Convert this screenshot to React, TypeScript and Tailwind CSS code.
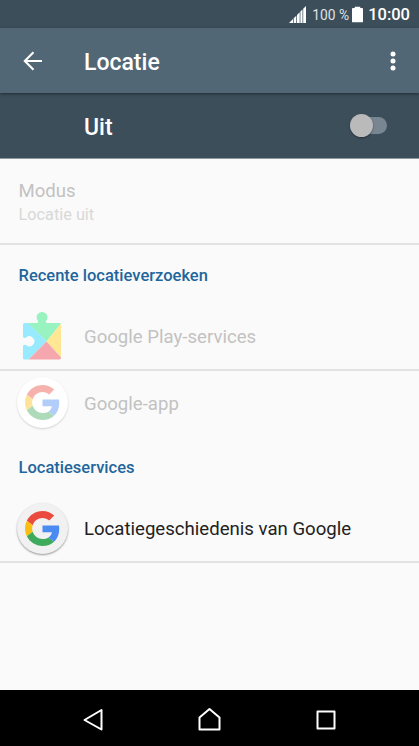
import React from "react";

interface AppRowProps {
  icon: React.ReactNode;
  label: string;
  disabled?: boolean;
}

const GoogleIcon: React.FC<{ disabled?: boolean }> = ({ disabled }) => (
  <div
    className={
      disabled
        ? "mb-[3px] flex size-[51px] items-center justify-center rounded-full bg-white shadow-[0_1px_2px_rgba(0,0,0,0.16)]"
        : "flex size-[51px] items-center justify-center rounded-full bg-[#f1f1f1] shadow-[0_1px_2px_rgba(0,0,0,0.4)]"
    }
  >
    <svg viewBox="0 0 48 48" className={disabled ? "size-[35px] opacity-40" : "size-[35px] opacity-95"}>
      <path
        fill="#EA4335"
        d="M24 9.5c3.54 0 6.71 1.22 9.21 3.6l6.85-6.85C35.9 2.38 30.47 0 24 0 14.62 0 6.51 5.38 2.56 13.22l7.98 6.19C12.43 13.72 17.74 9.5 24 9.5z"
      />
      <path
        fill="#4285F4"
        d="M46.98 24.55c0-1.57-.15-3.09-.38-4.55H24v9.02h12.94c-.58 2.96-2.26 5.48-4.78 7.18l7.73 6c4.51-4.18 7.09-10.36 7.09-17.65z"
      />
      <path
        fill="#FBBC05"
        d="M10.53 28.59c-.48-1.45-.76-2.99-.76-4.59s.27-3.14.76-4.59l-7.98-6.19C.92 16.46 0 20.12 0 24c0 3.88.92 7.54 2.56 10.78l7.97-6.19z"
      />
      <path
        fill="#34A853"
        d="M24 48c6.48 0 11.93-2.13 15.89-5.81l-7.73-6c-2.15 1.45-4.92 2.3-8.16 2.3-6.26 0-11.57-4.22-13.47-9.91l-7.98 6.19C6.51 42.62 14.62 48 24 48z"
      />
    </svg>
  </div>
);

const PlayServicesIcon = () => (
  <svg viewBox="0 0 38 49" className="mb-[3px] h-[49px] w-[38px]">
    {/* top quadrant with the knob */}
    <path
      fill="#98f3c1"
      d="M4.5 12H14.5c.8-1 .7-1.900-.2-3a5.400 5.400 0 1 1 9.400 0c-.9 1.100-1 2-.2 3H36.500q.9 0 1.300.7L23.500 30.500z"
    />
    {/* left quadrant with the notch */}
    <path
      fill="#98eaff"
      d="M0 13.500q0-1.500 1.500-1.500H5L23.500 30.500 5.500 48.500H1.500Q0 48.500 0 47V34.500c1-1 2-1 3.300-.2a5 5 0 1 0 0-8c-1.300.9-2.300.9-3.300-.3z"
    />
    <path fill="#ffe794" d="M37.8 12.700Q38 13 38 13.500V46.500L23.500 30.500z" />
    <path fill="#f6a6ad" d="M5.500 48.500 23.500 30.500 38 46.500q0 2-1.500 2z" />
  </svg>
);

const AppRow: React.FC<AppRowProps> = ({ icon, label, disabled }) => (
  <div className="flex h-[65px] items-center">
    <div className="flex w-[84px] justify-center">{icon}</div>
    <span className={disabled ? "pt-[2px] text-[18.6px] text-[#c2c2c2]" : "pt-[3px] text-[18.6px] text-[#212121]"}>
      {label}
    </span>
  </div>
);

const StatusBar = () => (
  <div className="flex h-7 items-center justify-end bg-[#3d4e5b] pr-[9px] text-white">
    <svg viewBox="0 0 17 17" className="h-[17px] w-[17px]" fill="#fff">
      <path d="M0 17 4 13V17zM4.700 12.300 7.300 9.700V17H4.700zM8 9l2.700-2.700V17H8zM11.400 5.600 13.500 3.500V17h-2.100zM14.200 2.800l2.800-2.800V17h-2.800z" />
    </svg>
    <span className="ml-[6px] pt-[2px] text-[13.8px] text-[#dfe3e6]">100 %</span>
    <svg viewBox="0 0 12 17" className="ml-[3px] h-[17px] w-[11px]" fill="#fff">
      <path d="M3 0h6v1.500h2q1 0 1 1V16q0 1-1 1H1q-1 0-1-1V2.500q0-1 1-1h2z" />
    </svg>
    <span className="ml-[5px] pt-[2px] text-[16.5px] font-medium">10:00</span>
  </div>
);

const NavBar = () => (
  <div className="h-14 bg-black">
    <svg viewBox="0 0 419 56" className="h-14 w-full" fill="none" stroke="#fff" strokeWidth="2" strokeLinejoin="round">
      <path d="M84.5 30 101.500 20V39.500z" />
      <path d="M199.500 39.500V27.500L209.500 19 219.500 27.500V39.500z" />
      <path d="M317.500 21.500H334.500V38.500H317.500z" />
    </svg>
  </div>
);

export default function App() {
  return (
    <div className="flex h-[746px] w-[419px] flex-col overflow-hidden bg-[#fafafa] font-[Roboto,sans-serif] whitespace-nowrap">
      <StatusBar />

      <header className="relative flex h-[65px] items-center bg-[#516776] text-white shadow-[0_1px_3px_rgba(0,0,0,0.45)]">
        <svg viewBox="0 0 20 20" className="ml-[23px] size-5" fill="none" stroke="#fff" strokeWidth="2.1">
          <path d="M19 10H2M10.500 1.300 1.800 10l8.700 8.700" />
        </svg>
        <h1 className="ml-[41px] pt-[6px] text-[23px] font-medium">Locatie</h1>
        <svg viewBox="0 0 6 20" className="mr-[23px] ml-auto h-5 w-[6px]" fill="#fff">
          <circle cx="3" cy="3" r="2.5" />
          <circle cx="3" cy="10" r="2.5" />
          <circle cx="3" cy="17" r="2.5" />
        </svg>
      </header>

      <div className="flex h-[66px] items-center border-b border-[#8f999f] bg-[#3d4e5b] text-white">
        <span className="ml-[84px] pt-[6px] text-[23px] font-medium">Uit</span>
        <div className="mr-[32px] ml-auto flex h-[17px] w-[37px] items-center rounded-full bg-[#788692]">
          <div className="size-[23px] shrink-0 rounded-full bg-[#bababa] shadow-[0_1px_2px_rgba(0,0,0,0.4)]" />
        </div>
      </div>

      <main className="flex-1">
        <section className="h-[86px] border-b-2 border-[#e2e2e2] pt-[20px] pl-[18.5px]">
          <p className="text-[18.6px] leading-[25px] text-[#c2c2c2]">Modus</p>
          <p className="text-[16.3px] leading-[22px] text-[#d8d8d8]">Locatie uit</p>
        </section>

        <section>
          <h2 className="h-[59px] pt-[19px] pl-[18.5px] text-[16.5px] leading-6 font-medium text-[#1f669c]">
            Recente locatieverzoeken
          </h2>
          <div className="border-b-2 border-[#e2e2e2]">
            <AppRow icon={<PlayServicesIcon />} label="Google Play-services" disabled />
          </div>
          <AppRow icon={<GoogleIcon disabled />} label="Google-app" disabled />
        </section>

        <section>
          <h2 className="h-[60px] pt-[20px] pl-[18.5px] text-[16.5px] leading-6 font-medium text-[#1f669c]">
            Locatieservices
          </h2>
          <div className="border-b-2 border-[#e2e2e2]">
            <AppRow icon={<GoogleIcon />} label="Locatiegeschiedenis van Google" />
          </div>
        </section>
      </main>

      <NavBar />
    </div>
  );
}
